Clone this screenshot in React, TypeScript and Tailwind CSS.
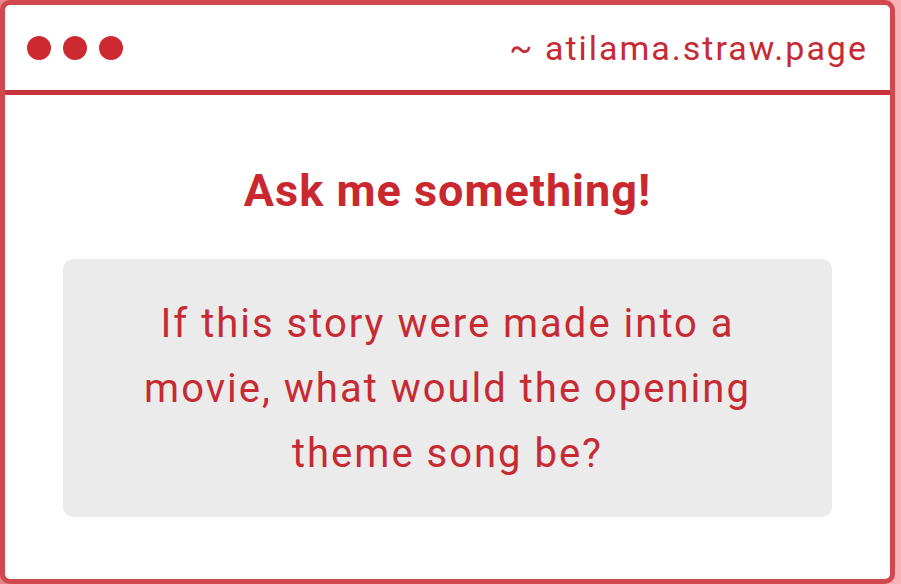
import React from "react";

export default function App() {
  return (
    <div
      className="w-[901px] h-[584px] overflow-hidden bg-gradient-to-r from-[#e9848a] to-[#f6b2b6]"
      style={{ fontFamily: "Roboto, 'Liberation Sans', sans-serif" }}
    >
      <div className="w-[895px] h-[584px] border-[5px] border-[#d0474d] rounded-[10px] bg-white flex flex-col overflow-hidden">
        <div className="h-[90px] shrink-0 flex items-center justify-between pl-[22px] pr-[22px] border-b-[5px] border-[#c9343a]">
          <div className="flex gap-[12px] pt-[1px]">
            <span className="w-[24px] h-[24px] rounded-full bg-[#cc2a30]" />
            <span className="w-[24px] h-[24px] rounded-full bg-[#cc2a30]" />
            <span className="w-[24px] h-[24px] rounded-full bg-[#cc2a30]" />
          </div>
          <div className="text-[34px] tracking-[2px] text-[#c62a32] leading-none">~ atilama.straw.page</div>
        </div>
        <div className="flex-1 flex flex-col items-center px-[58px]">
          <h1 className="mt-[70px] text-[45px] tracking-[1px] font-bold text-[#c9282f] leading-[52px]">Ask me something!</h1>
          <div className="mt-[42px] w-full h-[258px] rounded-[10px] bg-[#ecebec] flex items-center justify-center px-[30px]">
            <p className="text-[40px] tracking-[2px] leading-[65px] text-center text-[#c62a32]">
              If this story were made into a<br />movie, what would the opening<br />theme song be?
            </p>
          </div>
        </div>
      </div>
    </div>
  );
}
